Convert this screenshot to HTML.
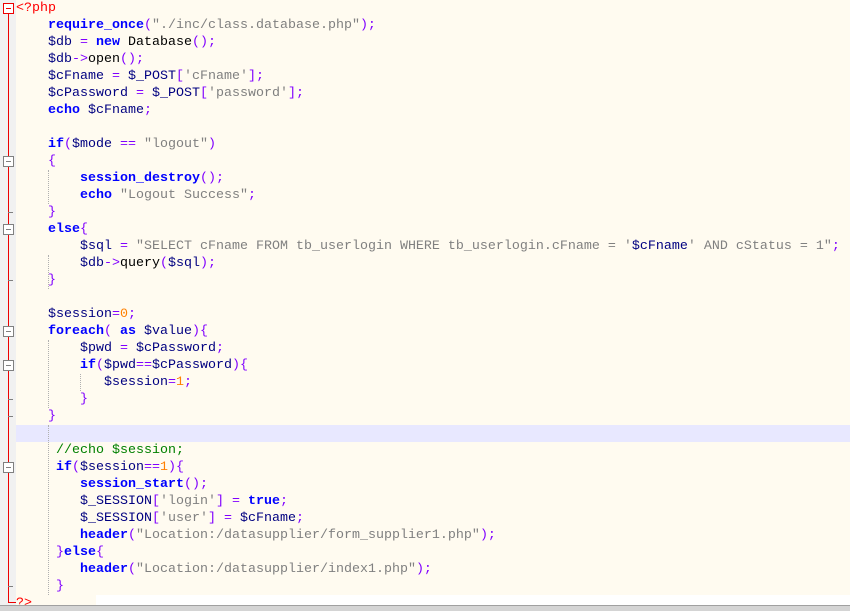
<!DOCTYPE html>
<html><head><style>
body{margin:0;width:850px;height:610px;overflow:hidden;background:#fff;position:relative;font-family:"Liberation Mono",monospace;}
#margin{position:absolute;left:0;top:0;width:16px;height:605px;background:#f1f1f1;}
#code{position:absolute;left:16px;top:0;width:834px;height:595px;background:#fffbf0;}
#hl{position:absolute;left:16px;top:425px;width:834px;height:17px;background:#e8e8ff;}
#last{position:absolute;left:16px;top:595px;width:80px;height:10px;background:#fffbf0;}
#bar{position:absolute;left:0;top:605px;width:850px;height:5px;background:#d4d4d4;border-top:1px solid #a0a0a0;}
#red{position:absolute;left:8px;top:13px;width:1px;height:590px;background:#e00;}
#redb{position:absolute;left:8px;top:602px;width:8px;height:1px;background:#e00;}
.box{position:absolute;left:3px;width:9px;height:9px;border:1px solid #808080;background:#fff;}
.box:after{content:"";position:absolute;left:2px;top:4px;width:5px;height:1px;background:#808080;}
.box.r{border-color:#e00;}.box.r:after{background:#e00;}
.tick{position:absolute;left:8px;width:5px;height:1px;background:#808080;}
pre{position:absolute;left:16px;top:0;margin:0;font-size:13.33px;line-height:17px;color:#000;}
.k{color:#0000ff;font-weight:bold}.v{color:#000080}.s{color:#808080}.o{color:#8000ff}
.n{color:#ff8000}.c{color:#008000}.p{color:#ff0000}
.g{position:absolute;width:0;border-left:1px dotted #b0b0b0;}
</style></head><body>
<div id="margin"></div><div id="code"></div><div id="hl"></div><div id="last"></div>
<div class="g" style="left:48px;top:170px;height:34px"></div>
<div class="g" style="left:48px;top:255px;height:34px"></div>
<div class="g" style="left:48px;top:340px;height:68px"></div>
<div class="g" style="left:80px;top:374px;height:17px"></div>
<div class="g" style="left:48px;top:425px;height:170px"></div>
<div id="red"></div><div id="redb"></div>
<div class="box r" style="top:3px"></div>
<div class="box" style="top:156px"></div>
<div class="box" style="top:224px"></div>
<div class="box" style="top:326px"></div>
<div class="box" style="top:360px"></div>
<div class="box" style="top:462px"></div>
<div class="tick" style="top:212px"></div>
<div class="tick" style="top:280px"></div>
<div class="tick" style="top:399px"></div>
<div class="tick" style="top:416px"></div>
<div class="tick" style="top:586px"></div>
<pre><span class="p">&lt;?php</span>
    <span class="k">require_once</span><span class="o">(</span><span class="s">"./inc/class.database.php"</span><span class="o">);</span>
    <span class="v">$db</span> <span class="o">=</span> <span class="k">new</span> Database<span class="o">();</span>
    <span class="v">$db</span><span class="o">-&gt;</span>open<span class="o">();</span>
    <span class="v">$cFname</span> <span class="o">=</span> <span class="v">$_POST</span><span class="o">[</span><span class="s">'cFname'</span><span class="o">];</span>
    <span class="v">$cPassword</span> <span class="o">=</span> <span class="v">$_POST</span><span class="o">[</span><span class="s">'password'</span><span class="o">];</span>
    <span class="k">echo</span> <span class="v">$cFname</span><span class="o">;</span>

    <span class="k">if</span><span class="o">(</span><span class="v">$mode</span> <span class="o">==</span> <span class="s">"logout"</span><span class="o">)</span>
    <span class="o">{</span>
        <span class="k">session_destroy</span><span class="o">();</span>
        <span class="k">echo</span> <span class="s">"Logout Success"</span><span class="o">;</span>
    <span class="o">}</span>
    <span class="k">else</span><span class="o">{</span>
        <span class="v">$sql</span> <span class="o">=</span> <span class="s">"SELECT cFname FROM tb_userlogin WHERE tb_userlogin.cFname = '</span><span class="v">$cFname</span><span class="s">' AND cStatus = 1"</span><span class="o">;</span>
        <span class="v">$db</span><span class="o">-&gt;</span>query<span class="o">(</span><span class="v">$sql</span><span class="o">);</span>
    <span class="o">}</span>

    <span class="v">$session</span><span class="o">=</span><span class="n">0</span><span class="o">;</span>
    <span class="k">foreach</span><span class="o">(</span> <span class="k">as</span> <span class="v">$value</span><span class="o">){</span>
        <span class="v">$pwd</span> <span class="o">=</span> <span class="v">$cPassword</span><span class="o">;</span>
        <span class="k">if</span><span class="o">(</span><span class="v">$pwd</span><span class="o">==</span><span class="v">$cPassword</span><span class="o">){</span>
           <span class="v">$session</span><span class="o">=</span><span class="n">1</span><span class="o">;</span>
        <span class="o">}</span>
    <span class="o">}</span>

     <span class="c">//echo $session;</span>
     <span class="k">if</span><span class="o">(</span><span class="v">$session</span><span class="o">==</span><span class="n">1</span><span class="o">){</span>
        <span class="k">session_start</span><span class="o">();</span>
        <span class="v">$_SESSION</span><span class="o">[</span><span class="s">'login'</span><span class="o">]</span> <span class="o">=</span> <span class="k">true</span><span class="o">;</span>
        <span class="v">$_SESSION</span><span class="o">[</span><span class="s">'user'</span><span class="o">]</span> <span class="o">=</span> <span class="v">$cFname</span><span class="o">;</span>
        <span class="k">header</span><span class="o">(</span><span class="s">"Location:/datasupplier/form_supplier1.php"</span><span class="o">);</span>
     <span class="o">}</span><span class="k">else</span><span class="o">{</span>
        <span class="k">header</span><span class="o">(</span><span class="s">"Location:/datasupplier/index1.php"</span><span class="o">);</span>
     <span class="o">}</span>
<span class="p">?&gt;</span></pre>
<div id="bar"></div>
</body></html>
